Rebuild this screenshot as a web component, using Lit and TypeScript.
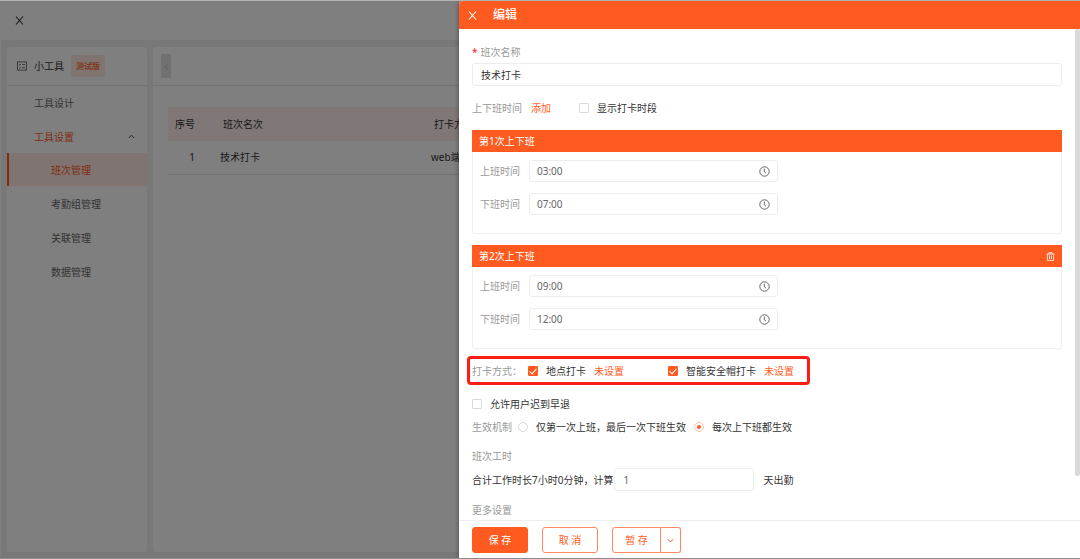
import { LitElement, html, css, svg, nothing } from "lit";
import { customElement, property, state } from "lit/decorators.js";
import { classMap } from "lit/directives/class-map.js";

const base = css`
  * {
    box-sizing: border-box;
    margin: 0;
    padding: 0;
  }
  :host {
    display: block;
    box-sizing: border-box;
    font-family: "Noto Sans", "Noto Sans CJK SC", sans-serif;
    font-size: 10px;
    line-height: 16px;
    color: #333;
  }
  button,
  input {
    font: inherit;
    color: inherit;
    background: none;
    border: 0;
    outline: 0;
    border-radius: 0;
  }
  button {
    cursor: pointer;
  }
  a {
    color: inherit;
    text-decoration: none;
  }
  svg {
    display: block;
    fill: none;
    stroke: currentColor;
  }
`;

const closeIcon = svg`<svg width="9" height="9" viewBox="0 0 9 9" stroke-width="1.1"><path d="M1 0.5 8 8.5M8 0.5 1 8.5"/></svg>`;
const clockIcon = svg`<svg width="11" height="11" viewBox="0 0 11 11"><circle cx="5.5" cy="5.5" r="4.7"/><path d="M5.3 2.6V5.8L7 7.2"/></svg>`;
const trashIcon = svg`<svg width="9" height="9" viewBox="0 0 9 9" stroke-width="0.8"><path d="M0.5 2H8.5M3 2V0.6H6V2M1.4 2V8.4H7.6V2M3.5 3.4V7M5.5 3.4V7"/></svg>`;
const listIcon = svg`<svg width="10" height="10" viewBox="0 0 10 10" stroke-width="0.8"><rect x="0.5" y="0.9" width="9" height="8.2"/><path d="M2 3.4 2.8 4.1 4 2.9M5 3.5H8M2 6.6 2.8 7.3 4 6.1M5 6.7H8"/></svg>`;
const chevron = (d: string) => svg`<svg width="7" height="7" viewBox="0 0 7 7"><path d=${d}/></svg>`;

@customElement("side-menu")
class SideMenu extends LitElement {
  static styles = [
    base,
    css`
      :host {
        background: #fff;
        border-radius: 4px;
        overflow: hidden;
      }
      .head {
        display: flex;
        align-items: center;
        height: 39px;
        padding: 0 10px;
        border-bottom: 1px solid #e6e6e6;
      }
      .head svg {
        color: #555;
      }
      .name {
        margin: 0 7px;
        font-size: 10px;
        font-weight: 400;
      }
      .tag {
        padding: 3px 5px;
        border-radius: 3px;
        background: #ffe9e0;
        color: #ff5b21;
        font-size: 8px;
        font-weight: 500;
      }
      .list {
        display: grid;
        gap: 1px;
        list-style: none;
        color: #666;
      }
      .link {
        display: flex;
        align-items: center;
        justify-content: space-between;
        width: 100%;
        height: 33px;
        padding: 0 12px 0 27px;
        color: inherit;
      }
      .open {
        color: #ff5b21;
      }
      .open svg {
        color: #555;
      }
      .sub .link {
        padding-left: 44px;
      }
      .sub .active {
        padding-left: 42px;
        border-left: 2px solid #ff5b21;
        background: #ffe9e4;
        color: #ff5b21;
      }
    `,
  ];

  private items = ["班次管理", "考勤组管理", "关联管理", "数据管理"];

  render() {
    return html`
      <div class="head">${listIcon}
        <h1 class="name">小工具</h1>
        <span class="tag">测试版</span>
      </div>
      <ul class="list">
        <li><a class="link" href="#design">工具设计</a></li>
        <li>
          <button class="link open" aria-expanded="true">工具设置${chevron("M0.8 5 3.5 2.2 6.2 5")}</button>
          <ul class="list sub">
            ${this.items.map(
              (t, i) => html`<li><a class=${classMap({ link: true, active: i === 0 })} href="#item-${i}">${t}</a></li>`
            )}
          </ul>
        </li>
      </ul>
    `;
  }
}

@customElement("shift-table")
class ShiftTable extends LitElement {
  static styles = [
    base,
    css`
      :host {
        background: #fff;
        border-radius: 4px;
      }
      .bar {
        height: 39px;
        padding: 7px 8px;
        border-bottom: 1px solid #e6e6e6;
      }
      .fold {
        display: grid;
        place-items: center;
        width: 10px;
        height: 24px;
        background: #e2e2e2;
        color: #bbb;
      }
      .wrap {
        padding: 21px 15px;
      }
      table {
        width: 100%;
        border-collapse: collapse;
        table-layout: fixed;
      }
      th {
        height: 34px;
        padding-left: 15px;
        background: #fff0ec;
        font-weight: 400;
        text-align: left;
      }
      td {
        height: 33px;
        padding-left: 12px;
        border-bottom: 1px solid #e2e2e2;
      }
      .num {
        width: 40px;
        padding: 0 13px 0 0;
        text-align: right;
      }
      .title {
        width: 211px;
      }
    `,
  ];

  render() {
    return html`
      <div class="bar"><button class="fold" aria-label="收起">${chevron("M5 0.8 2.2 3.5 5 6.2")}</button></div>
      <div class="wrap">
        <table>
          <thead>
            <tr><th class="num">序号</th><th class="title">班次名次</th><th>打卡方式</th></tr>
          </thead>
          <tbody>
            <tr><td class="num">1</td><td>技术打卡</td><td>web端</td></tr>
          </tbody>
        </table>
      </div>
    `;
  }
}

@customElement("shift-period")
class ShiftPeriod extends LitElement {
  static styles = [
    base,
    css`
      .head {
        display: flex;
        align-items: center;
        justify-content: space-between;
        height: 22px;
        padding: 0 7px;
        background: #ff5b21;
        color: #fff;
      }
      .title {
        font-size: 10px;
        font-weight: 400;
      }
      .body {
        display: grid;
        gap: 11px;
        padding: 8px 7px 18px;
        border: 1px solid #f0f0f0;
        border-top: 0;
        border-radius: 0 0 3px 3px;
      }
      .field {
        display: flex;
        align-items: center;
        gap: 9px;
        color: #999;
      }
      .box {
        display: flex;
        align-items: center;
        width: 249px;
        height: 22px;
        padding: 0 7px;
        border: 1px solid #ededed;
        border-radius: 3px;
        color: #666;
      }
      .time {
        flex: 1;
        min-width: 0;
      }
    `,
  ];

  @property({ type: Number }) index = 1;
  @property() start = "";
  @property() end = "";
  @property({ type: Boolean }) removable = false;

  private field(id: string, label: string, value: string) {
    return html`<div class="field">
      <label for=${id}>${label}</label>
      <div class="box"><input class="time" id=${id} type="text" .value=${value} />${clockIcon}</div>
    </div>`;
  }

  render() {
    return html`
      <div class="head">
        <h3 class="title">第${this.index}次上下班</h3>
        ${this.removable ? html`<button aria-label="删除">${trashIcon}</button>` : nothing}
      </div>
      <div class="body">
        ${this.field("start", "上班时间", this.start)} ${this.field("end", "下班时间", this.end)}
      </div>
    `;
  }
}

@customElement("shift-drawer")
class ShiftDrawer extends LitElement {
  static styles = [
    base,
    css`
      :host {
        display: flex;
        flex-direction: column;
        background: #fff;
        border-radius: 4px 0 0 0;
        overflow: hidden;
        box-shadow: -1px 0 4px rgba(0, 0, 0, 0.3);
      }
      .head {
        display: flex;
        align-items: center;
        gap: 16px;
        height: 28px;
        padding: 0 9px;
        background: #ff5b21;
        color: #fff;
      }
      .heading {
        font-size: 12px;
        font-weight: 500;
      }
      .main {
        position: relative;
        flex: 1;
        min-height: 0;
      }
      .scroll {
        height: 100%;
        padding: 15px 18px 15px 13px;
        overflow-y: auto;
        scrollbar-width: none;
      }
      .thumb {
        position: absolute;
        top: 0;
        right: 0;
        width: 5px;
        height: 91%;
        border-radius: 3px;
        background: #d9d9d9;
      }
      .muted {
        color: #999;
      }
      .star {
        margin-right: 3px;
        color: #f5222d;
      }
      .accent {
        color: #ff5b21;
      }
      .block {
        display: block;
      }
      .text {
        height: 23px;
        padding: 0 8px;
        border: 1px solid #ededed;
        border-radius: 3px;
      }
      .name {
        display: block;
        width: 100%;
        margin-top: 3px;
      }
      .row {
        display: flex;
        align-items: center;
      }
      .times {
        margin: 14px 0;
      }
      .add {
        margin: 0 28px 0 9px;
      }
      .option {
        display: flex;
        align-items: center;
        gap: 8px;
      }
      .second {
        margin-top: 11px;
      }
      .mark {
        appearance: none;
        display: grid;
        place-items: center;
        width: 10px;
        height: 10px;
        border: 1px solid #d9d9d9;
        background: #fff;
      }
      .mark[type="checkbox"] {
        border-radius: 1px;
      }
      .mark[type="checkbox"]:checked {
        border-color: #ff5b21;
        background: #ff5b21;
      }
      .mark[type="checkbox"]:checked::after {
        content: "";
        width: 3px;
        height: 6px;
        margin-bottom: 1px;
        border: solid #fff;
        border-width: 0 1px 1px 0;
        transform: rotate(42deg);
      }
      .mark[type="radio"] {
        border-radius: 50%;
      }
      .mark[type="radio"]:checked {
        border-color: #ffc4ae;
      }
      .mark[type="radio"]:checked::after {
        content: "";
        width: 4px;
        height: 4px;
        border-radius: 50%;
        background: #ff5b21;
      }
      .methods {
        width: fit-content;
        height: 29px;
        margin: 7px 0 11px -5px;
        padding: 0 13px 0 2px;
        border: 3px solid #fa1e14;
        border-radius: 4px;
      }
      .methods .accent {
        margin-left: 8px;
      }
      .place {
        margin-left: 6px;
      }
      .hat {
        margin-left: 44px;
      }
      .effect {
        gap: 6px;
        margin: 7px 0 13px;
      }
      .each {
        margin-left: 2px;
      }
      .hours {
        margin: 4px 0 11px;
      }
      .days {
        width: 140px;
        margin: 0 9px 0 1px;
        color: #666;
      }
      .foot {
        display: flex;
        gap: 14px;
        padding: 6px 13px 5px;
        border-top: 1px solid #ededed;
      }
      .btn {
        height: 26px;
        min-width: 56px;
        border: 1px solid #ff8a60;
        border-radius: 3px;
        color: #ff5b21;
        white-space: pre;
      }
      .primary {
        border-color: #ff5b21;
        background: #ff5b21;
        color: #fff;
      }
      .group {
        display: flex;
      }
      .left {
        min-width: 49px;
        border-radius: 3px 0 0 3px;
      }
      .more {
        display: grid;
        place-items: center;
        min-width: 20px;
        border-left: 0;
        border-radius: 0 3px 3px 0;
      }
    `,
  ];

  @state() private periods = [
    { start: "03:00", end: "07:00" },
    { start: "09:00", end: "12:00" },
  ];

  render() {
    return html`
      <header class="head">
        <button aria-label="关闭">${closeIcon}</button>
        <h2 class="heading">编辑</h2>
      </header>
      <div class="main">
        <form class="scroll">
          <label class="block muted" for="name"><span class="star">*</span>班次名称</label>
          <input class="text name" id="name" type="text" value="技术打卡" />
          <div class="row times">
            <span class="muted">上下班时间</span>
            <a class="accent add" href="#add">添加</a>
            <label class="option"><input class="mark" type="checkbox" />显示打卡时段</label>
          </div>
          ${this.periods.map(
            (p, i) => html`<shift-period
              class=${classMap({ second: i > 0 })}
              .index=${i + 1}
              .start=${p.start}
              .end=${p.end}
              .removable=${i > 0}
            ></shift-period>`
          )}
          <div class="row methods">
            <span class="muted">打卡方式：</span>
            <label class="option place"><input class="mark" type="checkbox" checked />地点打卡</label>
            <a class="accent" href="#place">未设置</a>
            <label class="option hat"><input class="mark" type="checkbox" checked />智能安全帽打卡</label>
            <a class="accent" href="#hat">未设置</a>
          </div>
          <label class="option"><input class="mark" type="checkbox" />允许用户迟到早退</label>
          <div class="row effect">
            <span class="muted">生效机制</span>
            <label class="option"><input class="mark" type="radio" name="effect" />仅第一次上班，最后一次下班生效</label>
            <label class="option each"><input class="mark" type="radio" name="effect" checked />每次上下班都生效</label>
          </div>
          <p class="muted">班次工时</p>
          <div class="row hours">
            <label for="days">合计工作时长7小时0分钟，计算</label>
            <input class="text days" id="days" type="text" value="1" />
            <span>天出勤</span>
          </div>
          <p class="muted">更多设置</p>
        </form>
        <div class="thumb"></div>
      </div>
      <footer class="foot">
        <button class="btn primary">保 存</button>
        <button class="btn">取 消</button>
        <div class="group">
          <button class="btn left">暂 存</button>
          <button class="btn more" aria-label="更多">${chevron("M0.8 2.2 3.5 5 6.2 2.2")}</button>
        </div>
      </footer>
    `;
  }
}

@customElement("app-root")
class AppRoot extends LitElement {
  static styles = [
    base,
    css`
      :host {
        position: relative;
        display: flex;
        flex-direction: column;
        height: 100vh;
        border-top: 1px solid #b4b4b4;
        border-bottom: 1px solid #8c8c8c;
        overflow: hidden;
        background: #f0f0f0;
      }
      .top {
        display: flex;
        align-items: center;
        height: 39px;
        padding: 0 15px;
        background: #fff;
      }
      .page {
        flex: 1;
        display: grid;
        grid-template-columns: 140px 1fr;
        gap: 6px;
        padding: 7px 6px 6px;
        border-left: 1px solid #fff;
      }
      .mask {
        position: absolute;
        inset: 0;
        background: rgba(0, 0, 0, 0.5);
      }
      .drawer {
        position: absolute;
        inset: 0 0 0 auto;
        width: 57.5%;
      }
    `,
  ];

  render() {
    return html`
      <header class="top"><button aria-label="关闭">${closeIcon}</button></header>
      <div class="page">
        <side-menu></side-menu>
        <shift-table></shift-table>
      </div>
      <div class="mask"></div>
      <shift-drawer class="drawer"></shift-drawer>
    `;
  }
}
